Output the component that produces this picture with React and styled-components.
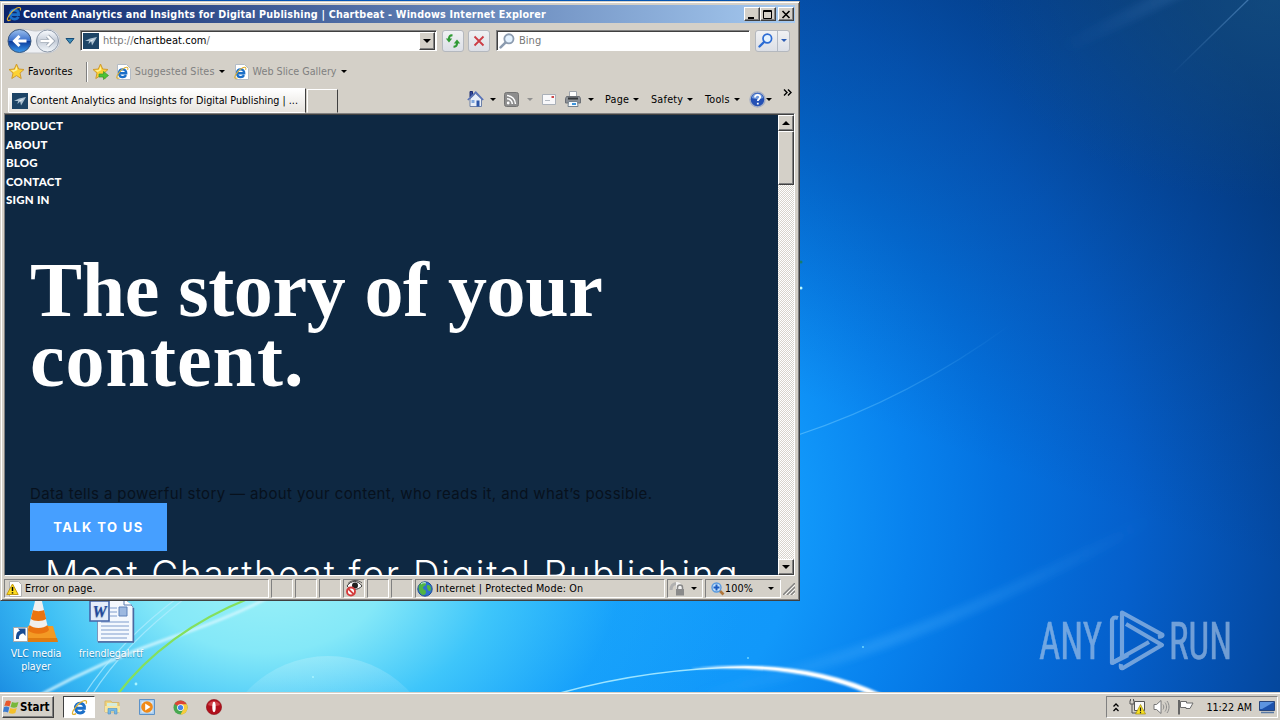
import React from 'react';
import styled, { createGlobalStyle, css } from 'styled-components';

const GlobalStyle = createGlobalStyle`
  * {
    box-sizing: border-box;
  }

  body {
    margin: 0;
    overflow: hidden;
    font-family: "DejaVu Sans Condensed", "DejaVu Sans", sans-serif;
    font-stretch: condensed;
    font-size: 10.7px;
    color: #000;
  }

  svg {
    display: block;
    flex: none;
  }
`;

const raised = css`
  background: #d4d0c8;
  border: 1px solid;
  border-color: #fff #404040 #404040 #fff;
  box-shadow: inset -1px -1px 0 #808080;
`;

const Text = styled.span`
  white-space: pre;
  margin-left: ${p => p.$ml || 0}px;
  margin-right: ${p => p.$mr || 0}px;
  letter-spacing: ${p => (p.$ls === undefined ? 'inherit' : p.$ls + 'px')};
  color: ${p => p.$color || 'inherit'};
  font-weight: ${p => (p.$bold ? 700 : 400)};
`;

const Desktop = styled.div`
  position: relative;
  width: 1280px;
  height: 720px;
  overflow: hidden;
  display: flex;
  flex-direction: column;
  justify-content: space-between;
  background:
    radial-gradient(ellipse 300px 200px at 1275px 0, rgba(30, 90, 130, .5), transparent),
    radial-gradient(ellipse 480px 330px at 265px 570px, #9cf2f8 0%, #84e8f8 25%, rgba(70, 205, 250, .85) 48%, rgba(30, 170, 250, .4) 74%, transparent 100%),
    linear-gradient(200deg, rgba(4, 50, 110, .55), transparent 48%),
    radial-gradient(circle at 560px 520px, #14a0fc 0, #1198fa 240px, #0882ee 350px, #0472e0 440px, #0560cc 570px, #044ba6 710px, #043c84 820px);
`;

const Wallpaper = styled.svg`
  position: absolute;
  inset: 0;
`;

const Watermark = styled.svg`
  position: absolute;
  left: 1036px;
  top: 606px;
`;

/* window frame */

const Window = styled.div`
  position: relative;
  width: 800px;
  height: 600px;
  margin-top: 1px;
  padding: 4px 5px 2px 4px;
  display: flex;
  flex-direction: column;
  background: #d4d0c8;
  border: 1px solid;
  border-color: #d4d0c8 #404040 #404040 #d4d0c8;
  box-shadow: inset 1px 1px 0 #fff, inset -1px -1px 0 #808080;
`;

const TitleBar = styled.div`
  flex: none;
  height: 18px;
  margin: -1px -1px 0 -1px;
  padding: 0 1px 0 2px;
  display: flex;
  align-items: center;
  background: linear-gradient(90deg, #0a246a, #a6caf0);
  color: #fff;

  > span {
    flex: 1;
  }
`;

const CaptionButton = styled.div`
  ${raised}
  width: 16px;
  height: 14px;
  margin-left: ${p => (p.$gap ? 2 : 0)}px;
  display: flex;
  justify-content: center;
  align-items: center;
`;

const NavRow = styled.div`
  flex: none;
  height: 35px;
  display: flex;
  align-items: center;
  padding-left: 1px;

  > svg + svg {
    margin-left: 3px;
  }
`;

const Caret = styled.i`
  flex: none;
  width: 0;
  height: 0;
  border: ${p => p.$size || 3}px solid transparent;
  border-top-color: ${p => p.$color || '#000'};
  border-bottom: 0;
`;

const Field = styled.div`
  height: 21px;
  width: ${p => p.$w}px;
  margin-left: ${p => p.$ml}px;
  display: flex;
  align-items: center;
  background: #fff;
  border: 1px solid;
  border-color: #808080 #fff #fff #808080;
  box-shadow: inset 1px 1px 0 #404040;
  padding: 1px 1px 1px 2px;
`;

const FieldText = styled.div`
  flex: 1;
  margin-left: 4px;
  font-size: 11px;
  line-height: 13px;
  letter-spacing: .04px;
  color: #777;
  white-space: pre;
`;

const FieldArrow = styled.div`
  ${raised}
  width: 16px;
  height: 18px;
  display: flex;
  justify-content: center;
  align-items: center;
`;

const SoftButton = styled.div`
  width: ${p => p.$w || 22}px;
  height: 22px;
  margin-left: ${p => p.$ml}px;
  display: flex;
  justify-content: center;
  align-items: center;
  border: 1px solid #b4b8be;
  border-radius: 3px;
  background: linear-gradient(#f0f1f3, #dcdfe6);
`;

const SplitLine = styled.div`
  width: 1px;
  height: 20px;
  background: #b4bac4;
  margin: 0 3px 0 4px;
`;

const FavRow = styled.div`
  flex: none;
  height: 27px;
  display: flex;
  align-items: center;
  padding-left: 3px;
  letter-spacing: .15px;
`;

const Separator = styled.div`
  width: 2px;
  height: 20px;
  margin: 0 4px 0 12px;
  border-left: 1px solid #808080;
  background: #fff;
`;

const TabRow = styled.div`
  flex: none;
  height: 28px;
  display: flex;
  align-items: flex-end;
  padding-left: 3px;
`;

const Tab = styled.div`
  width: 298px;
  height: 25px;
  display: flex;
  align-items: center;
  padding-left: 3px;
  background: linear-gradient(#fff, #e6e3de);
  border: 1px solid;
  border-color: #fff #404040 transparent #fff;
`;

const NewTab = styled.div`
  width: 31px;
  height: 24px;
  margin-left: 1px;
  border: 1px solid;
  border-color: #fff #404040 transparent #fff;
`;

const CommandBar = styled.div`
  margin-left: 129px;
  height: 28px;
  display: flex;
  align-items: center;
  letter-spacing: .25px;
`;

const Command = styled.div`
  width: ${p => p.$w}px;
  display: flex;
  align-items: center;
`;

const CommandFace = styled.div`
  flex: none;
  width: ${p => p.$w}px;
  display: flex;
`;

const Chevron = styled.div`
  align-self: flex-start;
  padding-top: 4px;
`;

/* page */

const Viewport = styled.div`
  flex: none;
  height: 463px;
  margin: 0 -1px;
  display: flex;
  border: 1px solid;
  border-color: #808080 #fff #fff #808080;
  box-shadow: inset 0 1px 0 #404040;
  padding-top: 1px;
`;

const Page = styled.div`
  flex: 1;
  overflow: hidden;
  background: #0e2842;
  color: #fff;
`;

const PageNav = styled.nav`
  display: flex;
  flex-direction: column;
  padding: 2px 0 0 1px;

  a {
    font: 900 11.5px/18.6px Lato, sans-serif;
    letter-spacing: .22px;
  }
`;

const Headline = styled.h1`
  margin: 45px 0 0 25px;
  display: flex;
  flex-direction: column;
  font: 700 78px/70px "Liberation Serif", serif;
  white-space: pre;
`;

const HeadlineRow = styled.span`
  letter-spacing: ${p => p.$ls}px;
`;

const Lead = styled.p`
  margin: 90px 0 0 25px;
  font: 400 15px/18px Inter, sans-serif;
  letter-spacing: .38px;
  color: #07111d;
  white-space: pre;
`;

const TalkButton = styled.div`
  width: 137px;
  height: 48px;
  margin-left: 25px;
  background: #469fff;
  display: flex;
  justify-content: center;
  align-items: center;
  font: 700 13px/48px Inter, sans-serif;
  letter-spacing: 1.4px;
  white-space: pre;
`;

const Subhead = styled.h2`
  margin: 0 0 0 40px;
  font: 300 37px/45px Inter, sans-serif;
  letter-spacing: 1.74px;
  white-space: pre;
`;

const ScrollBar = styled.div`
  width: 16px;
  display: flex;
  flex-direction: column;
  background: repeating-conic-gradient(#fff 0 25%, #d8d4cc 0 50%) 0 0 / 2px 2px;
`;

const ScrollButton = styled.div`
  ${raised}
  height: ${p => p.$h || 16}px;
  margin-top: ${p => (p.$end ? 'auto' : 0)};
  display: flex;
  justify-content: center;
  align-items: center;
`;

const StatusBar = styled.div`
  flex: none;
  height: 21px;
  margin: 2px -3px 0 -1px;
  display: flex;
  align-items: center;
  gap: 2px;
  letter-spacing: .16px;
`;

const Panel = styled.div`
  flex: none;
  width: ${p => p.$w}px;
  height: 19px;
  padding-left: 1px;
  display: flex;
  align-items: center;
  border: 1px solid;
  border-color: #808080 #fff #fff #808080;
  white-space: pre;
`;

/* desktop icons and taskbar */

const DesktopIcons = styled.div`
  position: absolute;
  left: 0;
  top: 599px;
  display: flex;
`;

const DesktopIcon = styled.div`
  width: ${p => p.$w}px;
  display: flex;
  flex-direction: column;
  align-items: center;
  color: #fff;
  font-size: 10.5px;
  line-height: 13px;
  text-align: center;
  text-shadow: 0 1px 1px rgba(0, 60, 110, .5);

  svg {
    margin-bottom: 4px;
  }
`;

const TaskBar = styled.div`
  position: relative;
  height: 28px;
  display: flex;
  align-items: center;
  padding: 1px 2px 0 2px;
  background: #d4d0c8;
  border-top: 1px solid #d4d0c8;
  box-shadow: inset 0 1px 0 #fff;
`;

const StartButton = styled.div`
  ${raised}
  width: 52px;
  height: 22px;
  display: flex;
  align-items: center;
  font-size: 11.5px;
`;

const ActiveTask = styled.div`
  width: 32px;
  height: 22px;
  margin: 0 1px 0 9px;
  display: flex;
  justify-content: center;
  align-items: center;
  background: #fff;
  border: 1px solid;
  border-color: #404040 #fff #fff #404040;
`;

const Task = styled.div`
  width: 33.7px;
  display: flex;
  justify-content: center;
`;

const Tray = styled.div`
  width: 172px;
  height: 22px;
  margin-left: auto;
  padding: 0 2px 0 6px;
  display: flex;
  align-items: center;
  border: 1px solid;
  border-color: #808080 #fff #fff #808080;
`;

const TrayCell = styled.div`
  width: ${p => p.$w}px;
`;

const IeIcon = ({ size = 16, boxed }) => (
  <svg width={size} height={size} viewBox="0 0 16 16">
    {boxed && <path d="M1.500 .5h9l4 4v11h-13z" fill="#fff" stroke="#b4bcc6" />}
    <g fill="none" transform={boxed ? 'translate(-.5 2) scale(.85)' : undefined}>
      <path d="M4.400 8.600h8.200C12.800 5.800 11 4 8.500 4S4.200 5.900 4.200 8.500s1.700 4.600 4.300 4.600c1.800 0 3.100-.8 3.900-2.300" stroke="#1b6fc8" strokeWidth="2.800" />
      <path d="M5 6.500C5.700 5 7 4.100 8.500 4.100" stroke="#6db9f4" strokeWidth="1" />
      <path d="M14.200 4.500c.8-2 .3-3.200-1.300-3-2.200.3-6 3.100-8.600 6.300-2.300 2.900-3.500 5.700-2.500 6.500.6.500 1.700.2 3-.5" stroke="#e0b030" strokeWidth="1.200" />
    </g>
  </svg>
);

const SiteIcon = () => (
  <svg width="16" height="16" viewBox="0 0 16 16">
    <path d="M0 0h16v16H0z" fill="#1d4466" />
    <path d="m2 8 5-2.500 7-1.500-2 3.500-3 5-.8-4L5.500 11 6 8z" fill="#a9bfd0" />
    <path d="m7 7.500 5-2-3.500 3z" fill="#e4ecf2" />
  </svg>
);

const NavArrows = () => (
  <svg width="56" height="26" viewBox="0 0 56 26">
    <defs>
      <linearGradient id="back" x2="0" y2="1">
        <stop offset="0" stopColor="#9cc0ee" />
        <stop offset=".48" stopColor="#3a70cc" />
        <stop offset=".52" stopColor="#0c3c9c" />
        <stop offset="1" stopColor="#3c9cf0" />
      </linearGradient>
      <linearGradient id="fwd" x2="0" y2="1">
        <stop offset="0" stopColor="#fafcff" />
        <stop offset=".5" stopColor="#c4ccd8" />
        <stop offset="1" stopColor="#f4f8fc" />
      </linearGradient>
    </defs>
    <path d="M13 1c9 0 12 2 17 2s8-2 12-2a12 12 0 0 1 0 24H13z" fill="#eef0f4" stroke="#c4c6ca" />
    <circle cx="13.500" cy="13" r="11.500" fill="url(#back)" stroke="#3c587c" />
    <circle cx="41.500" cy="13" r="11" fill="url(#fwd)" stroke="#8c98a8" />
    <path d="M20.500 13h-12m5-5-5 5 5 5" fill="none" stroke="#fff" strokeWidth="3" />
    <path d="M34.500 13h12m-5-5 5 5-5 5" fill="none" stroke="#99a3b0" strokeWidth="4" />
    <path d="M34.500 13h12m-5-5 5 5-5 5" fill="none" stroke="#fff" strokeWidth="2.400" />
  </svg>
);

const Star = ({ add }) => (
  <svg width="17" height="17" viewBox="0 0 17 17">
    <path d="m8.500 1 2.200 5 5.300.5-4 3.600 1.200 5.400-4.700-2.900-4.700 2.900L5 10.100 1 6.500 6.300 6z" fill="#fcd232" stroke="#d09a30" strokeLinejoin="round" />
    <path d="m8.500 3 1 4-4 2L3 7.300l4-.4z" fill="#fff09a" />
    {add && <path d="M7 11h4.500V8.500l5 4-5 4V14H7z" fill="#4cc434" stroke="#3a962c" strokeWidth=".7" />}
  </svg>
);

const Lens = ({ size = 15, color = '#2c6cd4', glass = '#e4f2ff', handle }) => (
  <svg width={size} height={size} viewBox="0 0 15 15">
    <path d="m6.500 8.500-5 5" stroke={handle || color} strokeWidth="2.400" strokeLinecap="round" />
    <circle cx="9.300" cy="5.500" r="4.300" fill={glass} stroke={color} strokeWidth="1.700" />
  </svg>
);

const Home = () => (
  <svg width="17" height="18" viewBox="0 0 17 18">
    <path d="M3 1.500h2.500V5L3 7z" fill="#30499c" stroke="#1d2c70" />
    <path d="M3 9v7.500h11.500V9L8.700 3.500z" fill="#e8eef8" stroke="#6c80a8" />
    <path d="m.8 10 8-7.800 7.400 7.800" fill="none" stroke="#5872b8" strokeWidth="1.600" />
    <path d="M9.500 10.500h3v6h-3z" fill="#2c56a8" />
    <path d="M4.500 10h3v3h-3z" fill="#7fa6dc" />
  </svg>
);

const Rss = () => (
  <svg width="15" height="15" viewBox="0 0 15 15">
    <rect x=".5" y=".5" width="14" height="14" rx="2" fill="#8d8d8d" stroke="#747474" />
    <circle cx="4.200" cy="11" r="1.400" fill="#fff" />
    <path d="M3 6.800A5.200 5.200 0 0 1 8.300 12M3 3.600A8.500 8.500 0 0 1 11.500 12" fill="none" stroke="#fff" strokeWidth="1.500" />
  </svg>
);

const Mail = () => (
  <svg width="14" height="11" viewBox="0 0 14 11">
    <path d="M.5.5h13v10H.5z" fill="#f8f8fa" stroke="#aab0b8" />
    <path d="M9.500 2H12v2H9.500z" fill="#cc4848" />
    <path d="M3 6.500h5" stroke="#b4bac2" />
  </svg>
);

const Printer = () => (
  <svg width="16" height="16" viewBox="0 0 16 16">
    <path d="M4.500.5h7V6h-7z" fill="#fff" stroke="#a0a6ae" />
    <path d="M1.500 5.500h13l1 2v4.500H.5V7.500z" fill="#8c9096" stroke="#6c7076" />
    <path d="M3 7.500h10" stroke="#34383c" strokeWidth="2" />
    <path d="M3.500 10.500h9l.5 5H3z" fill="#f4faff" stroke="#76828e" />
    <path d="M7 12h4v2H7z" fill="#3c94dc" />
  </svg>
);

const Help = () => (
  <svg width="17" height="17" viewBox="0 0 17 17">
    <circle cx="8.500" cy="8.500" r="7.500" fill="#2450b4" stroke="#a4aec4" strokeWidth="1.500" />
    <path d="M2.700 7a6 6 0 0 1 11.600 0c-4 1.500-7 1.500-11.600 0z" fill="#6f98dc" />
    <path d="M6 6.500c0-3.400 5.200-3.200 5.200-.4 0 1.900-2.400 1.900-2.400 4M8.800 11.800v1.800" fill="none" stroke="#fff" strokeWidth="1.800" />
  </svg>
);

const Refresh = () => (
  <svg width="16" height="16" viewBox="0 0 16 16">
    <g fill="none" stroke="#2f9a34" strokeWidth="2.200">
      <path d="M7.500 2.500C5 2 4 3.500 4 6M8.500 13.500c2.500.5 3.500-1 3.500-3.500" />
    </g>
    <path d="M.8 5.500h6.400L4 9.500zM8.800 10.500h6.400L12 6.500z" fill="#2f9a34" />
  </svg>
);

const Warning = () => (
  <svg width="17" height="16" viewBox="0 0 17 16">
    <path d="M3.500.5h9l3 3v12h-12z" fill="#fff" stroke="#b0b0b0" />
    <path d="m6.500 3 5.700 10.500H.8z" fill="#fcdc20" stroke="#c49a10" strokeLinejoin="round" />
    <path d="M6.500 6v4M6.500 11.200v1.400" stroke="#000" strokeWidth="1.500" />
  </svg>
);

const EyeBlocked = () => (
  <svg width="19" height="17" viewBox="0 0 19 17">
    <path d="M2 6c4-6 11-6 15 0-4 4.500-11 4.500-15 0z" fill="#fff" stroke="#3c3c3c" />
    <circle cx="10" cy="5.500" r="3" fill="#222" />
    <path d="M3 3.500C7-.5 13-.5 17 3" fill="none" stroke="#555" />
    <circle cx="6" cy="11.500" r="4" fill="#fff" stroke="#d43c3c" strokeWidth="1.900" />
    <path d="m3.300 8.800 5.400 5.400" stroke="#d43c3c" strokeWidth="1.900" />
  </svg>
);

const Globe = () => (
  <svg width="16" height="16" viewBox="0 0 16 16">
    <circle cx="8" cy="8" r="7.200" fill="#2d6fd0" stroke="#1d4c94" />
    <path d="M3 3c3-3 6-2 6 0S6 5 6 7s3 1 3 4-3 4-5 2-3.500-8-1-10z" fill="#50b444" />
    <path d="M11 4c2 0 3 2 3 4s-2 3-3 1-2-5 0-5z" fill="#50b444" />
    <path d="M4 3c2-1.500 4-1.500 5-1" stroke="#cce8ff" fill="none" />
  </svg>
);

const ZoneLock = () => (
  <svg width="16" height="15" viewBox="0 0 16 15">
    <path d="M2 9c0-4 2-6 5-6.500" stroke="#b0b0b0" strokeWidth="3" fill="none" />
    <path d="M7 1c4 0 6 2 6 6v5H7z" fill="#f2f2f2" />
    <path d="M8.500 8V6.500a2.500 2.500 0 0 1 5 0V8" fill="none" stroke="#888" strokeWidth="1.500" />
    <path d="M7 8h8v6.500H7z" fill="#8a8a8a" />
  </svg>
);

const ZoomIcon = () => (
  <svg width="14" height="14" viewBox="0 0 14 14">
    <path d="m8 8 4.500 4.500" stroke="#b0763a" strokeWidth="2.600" />
    <circle cx="5.500" cy="5.500" r="4.500" fill="#c4e2fc" stroke="#5a9ade" strokeWidth="1.400" />
    <path d="M5.500 2.500v6M2.500 5.500h6" stroke="#1c5cc0" strokeWidth="2" />
  </svg>
);

const Grip = () => (
  <svg width="12" height="12" viewBox="0 0 12 12">
    <path d="M0 12 12 0M4 12l8-8M8 12l4-4" stroke="#808080" strokeWidth="1.400" />
    <path d="M2 12 12 2M6 12l6-6M10 12l2-2" stroke="#fff" strokeWidth=".8" />
  </svg>
);

const VlcIcon = () => (
  <svg width="46" height="44" viewBox="0 0 46 44">
    <path d="m15 27-5 14h34l-4-14z" fill="#f39a24" />
    <path d="m11 39-1 4h35l-1-4z" fill="#e07c10" />
    <path d="M22.500 0h6L35 29c-3 4.500-16 4.500-19.500 0z" fill="#f0f0ee" />
    <path d="m20 11-2.200 9c3 2.500 12 2.500 15.400 0L31 11c-3 1.500-8 1.500-11 0z" fill="#ea7410" />
    <path d="m16.500 26-1.500 5c4 5 17 5 21 0l-1.500-5c-4 4-14 4-18 0z" fill="#ea7410" />
    <path d="M.5 28.500h14v14H.5z" fill="#fff" stroke="#aaa" />
    <path d="M3 40c0-6 1.500-8 4-8l-2-2.500h7.500V37L10.500 34.500c-3.500 0-5 2.500-4.500 5.500z" fill="#184c94" />
  </svg>
);

const DocIcon = () => (
  <svg width="48" height="44" viewBox="0 0 48 44">
    <path d="M10.500 0H38l8 8v34.500H10.500z" fill="#f4f8fe" stroke="#7c96bc" />
    <path d="M46.500 9v34M11 43h36" stroke="#4c68a0" strokeWidth="1.400" />
    <path d="M37 0v6h8" fill="#fff" stroke="#5b7cb0" />
    <path d="M23 9h7M23 13h7M23 17h7M14 23h28M14 27h28M14 31h28M14 35h28M14 39h26" stroke="#7e9ccc" />
    <path d="M32 8h8v9h-8z" fill="#9cb8e0" stroke="#5c80b8" />
    <path d="M3 2h19v20H3z" fill="#e4ecfa" stroke="#4464a8" strokeWidth="1.600" />
    <text x="12.500" y="17.500" textAnchor="middle" fontFamily="Liberation Serif" fontSize="16" fontWeight="700" fontStyle="italic" fill="#24489c">W</text>
  </svg>
);

const StartFlag = () => (
  <svg width="17" height="16" viewBox="0 0 17 16">
    <path d="M3 2c2-1 3.500-.5 5 .5L6.500 7.500C5 6.500 3 6.500 1.300 7z" fill="#e8582c" />
    <path d="M9 3c2 1 4 1 6.500 0L14 8c-2 1-4.500.7-6.500 0z" fill="#78b83c" />
    <path d="M1 8c2-1 3.700-.5 5.300.5L5 13.500C3.500 12.500 1.500 12.500 0 13z" fill="#3c7cd0" />
    <path d="M7.300 9c2 1 4 1 6.500 0l-1.500 5c-2 1-4.500.7-6.500 0z" fill="#f4c02c" />
  </svg>
);

const FolderIcon = () => (
  <svg width="17" height="16" viewBox="0 0 17 16">
    <path d="M1 2h6l1 1.500h7V13H1z" fill="#f2d478" stroke="#d4b870" />
    <path d="M3 4h10v4H3z" fill="#d4ecdc" />
    <path d="M1 7h15v6H1z" fill="#f8e6a0" />
    <path d="M4 15V9.500h9V15h-2.500v-3h-4v3z" fill="#76b8e4" stroke="#4a92c8" strokeWidth=".6" />
  </svg>
);

const MediaIcon = () => (
  <svg width="16" height="16" viewBox="0 0 16 16">
    <path d="M.5.500h15v15H.5z" fill="#a8ccee" stroke="#5c92c8" />
    <path d="M2.500 2.500h11v11h-11z" fill="#dcecfa" />
    <circle cx="8" cy="8" r="5.800" fill="#f08a18" />
    <path d="m6.200 4.600 5.300 3.400-5.300 3.400z" fill="#fff" />
  </svg>
);

const ChromeIcon = () => (
  <svg width="15" height="15" viewBox="0 0 16 16">
    <circle cx="8" cy="8" r="7.500" fill="#48a850" />
    <path d="M8 8 1.500 4.250A7.500 7.500 0 0 1 14.500 4.250z" fill="#dc4436" />
    <path d="M8 4.500h6.650A7.500 7.500 0 0 1 8 15.500L11.200 9.500z" fill="#f8cc3c" />
    <circle cx="8" cy="8" r="3.600" fill="#fff" />
    <circle cx="8" cy="8" r="2.800" fill="#4484e8" />
  </svg>
);

const OperaIcon = () => (
  <svg width="16" height="16" viewBox="0 0 16 16">
    <circle cx="8" cy="8" r="7.600" fill="#b0101c" stroke="#8c0c14" strokeWidth=".6" />
    <path d="M2 6a6.500 6 0 0 1 12 0c-3 1.500-9 1.500-12 0z" fill="#d0444a" />
    <ellipse cx="8" cy="8" rx="1.700" ry="5.200" fill="#fff" />
  </svg>
);

const NetIcon = () => (
  <svg width="17" height="16" viewBox="0 0 17 16">
    <path d="M5.500 2.500h10v9h-10z" fill="#f8f8f8" stroke="#555" />
    <path d="M1 1.500v3.500h4V1.500M3 5v9h5M1.500 0v2M4.500 0v2" fill="none" stroke="#555" />
    <path d="m11.500 5.500 5 9.500h-10z" fill="#f8e020" stroke="#a08c10" strokeWidth=".7" />
    <path d="M11.500 8.500v3.500M11.500 12.800v1.400" stroke="#222" strokeWidth="1.200" />
  </svg>
);

const SpeakerIcon = () => (
  <svg width="17" height="16" viewBox="0 0 17 16">
    <path d="M1 5.500h2.500L8 1.500v13l-4.500-4H1z" fill="#fff" stroke="#777" />
    <path d="M10 5.500c1 1.500 1 3.500 0 5M12 3.500c2 2.500 2 6.500 0 9M14 2c2.700 3.500 2.700 8.500 0 12" fill="none" stroke="#8c8c8c" />
  </svg>
);

const FlagIcon = () => (
  <svg width="17" height="16" viewBox="0 0 17 16">
    <path d="M2 1v14.500" stroke="#666" strokeWidth="2" />
    <path d="M3.500 2.500h6v1.500H16l-3 5.500H9V8.500H3.500z" fill="#fff" stroke="#6c6c6c" />
  </svg>
);

const MonitorIcon = () => (
  <svg width="16" height="13" viewBox="0 0 16 13">
    <path d="M.5.5h15v9H.5z" fill="#1c52ac" stroke="#28467c" />
    <path d="M1 1h14L3 8H1z" fill="#5c94e0" />
    <path d="M2 11.500h13" stroke="#5878a4" strokeWidth="1.500" />
  </svg>
);

const Streaks = () => (
  <Wallpaper width="1280" height="720" viewBox="0 0 1280 720">
    <defs>
      <linearGradient id="fade">
        <stop offset="0" stopColor="#6cc8ff" stopOpacity=".6" />
        <stop offset="1" stopColor="#6cc8ff" stopOpacity="0" />
      </linearGradient>
      <linearGradient id="beam" gradientUnits="userSpaceOnUse" x1="690" y1="690" x2="1150" y2="520">
        <stop offset="0" stopColor="#50b4ff" stopOpacity="0" />
        <stop offset=".4" stopColor="#50b4ff" stopOpacity=".3" />
        <stop offset="1" stopColor="#50b4ff" stopOpacity="0" />
      </linearGradient>
      <linearGradient id="beamTop" gradientUnits="userSpaceOnUse" x1="1180" y1="0" x2="1060" y2="50">
        <stop offset="0" stopColor="#5c9cdc" stopOpacity=".16" />
        <stop offset="1" stopColor="#5c9cdc" stopOpacity="0" />
      </linearGradient>
      <linearGradient id="ray" gradientUnits="userSpaceOnUse" x1="1250" y1="0" x2="1172" y2="74">
        <stop offset="0" stopColor="#6ca4dc" stopOpacity=".5" />
        <stop offset="1" stopColor="#6ca4dc" stopOpacity="0" />
      </linearGradient>
      <linearGradient id="ball" x2="0" y2="1">
        <stop offset="0" stopColor="#fff" stopOpacity=".2" />
        <stop offset=".3" stopColor="#fff" stopOpacity="0" />
      </linearGradient>
      <filter id="soft" x="-20%" y="-50%" width="140%" height="200%"><feGaussianBlur stdDeviation="1" /></filter>
      <filter id="softer" x="-20%" y="-50%" width="140%" height="200%"><feGaussianBlur stdDeviation="3" /></filter>
    </defs>
    <g fill="none">
      <path d="M40 695Q105 660 170 638T275 594" stroke="#d8f8ff" strokeWidth="3" opacity=".8" filter="url(#soft)" />
      <path d="M84 695Q120 640 180 596M92 695Q124 644 188 596" stroke="#b4ecff" strokeWidth="1.200" opacity=".7" />
      <path d="M117 695Q165 632 250 598" stroke="#84e05c" strokeWidth="2.200" />
      <circle cx="328" cy="767" r="111" fill="url(#ball)" />
      <path d="M690 698Q860 660 1000 595T1180 500" stroke="url(#beam)" strokeWidth="12" filter="url(#softer)" />
      <path d="M560 693Q650 668 748 667Q815 669 876 694" stroke="#9ce4ff" strokeWidth="1.600" />
      <path d="M690 669Q800 656 882 694L868 694Q800 664 690 669z" fill="#fff" filter="url(#soft)" />
      <path d="M798 435Q910 398 1010 325" stroke="url(#fade)" strokeWidth="1.300" />
      <path d="M1250-2 1172 74" stroke="url(#ray)" strokeWidth="1.300" />
      <path d="M1190-15 1050 55" stroke="url(#beamTop)" strokeWidth="14" filter="url(#softer)" />
    </g>
    <circle cx="801" cy="288" r="1.500" fill="#b8f8ff" />
    <circle cx="801" cy="262" r="1.500" fill="#187c6c" />
    <circle cx="863" cy="647" r="1" fill="#6cd4ff" />
    <circle cx="748" cy="658" r="1" fill="#6cd4ff" />
    <circle cx="136" cy="684" r="1.400" fill="#a8f4ff" />
    <circle cx="313" cy="677" r="1" fill="#a8f4ff" />
  </Wallpaper>
);

const AnyRun = () => (
  <Watermark width="206" height="76" viewBox="0 0 206 76">
    <g opacity=".62" fill="#b4cdea" stroke="#b4cdea" fontFamily="Roboto, sans-serif" fontSize="52">
      <text x="3" y="53" strokeWidth=".5" textLength="63" lengthAdjust="spacingAndGlyphs">ANY</text>
      <text x="133" y="53" strokeWidth=".5" textLength="63" lengthAdjust="spacingAndGlyphs">RUN</text>
      <g fill="none" strokeWidth="4.200" strokeLinejoin="round">
        <path d="M82 12Q76 10 76 16V57L113 36" />
        <path d="M86 50V6.500L126 28.500Q128 30 122 31" />
        <path d="M76 57 92 49M90 18 126 39 87 62Q84 63 85 58" />
      </g>
    </g>
  </Watermark>
);

const App = () => (
  <>
    <GlobalStyle />
    <Desktop>
      <Streaks />
      <DesktopIcons>
        <DesktopIcon $w={72}>
          <VlcIcon />
          <Text>{'VLC media\nplayer'}</Text>
        </DesktopIcon>
        <DesktopIcon $w={78}>
          <DocIcon />
          <Text>friendlegal.rtf</Text>
        </DesktopIcon>
      </DesktopIcons>
      <AnyRun />

      <Window>
        <TitleBar>
          <IeIcon />
          <Text $bold $ml={1} $ls={.19}>Content Analytics and Insights for Digital Publishing | Chartbeat - Windows Internet Explorer</Text>
          <CaptionButton>
            <svg width="10" height="9"><path d="M1 7h6v2H1z" /></svg>
          </CaptionButton>
          <CaptionButton>
            <svg width="10" height="9"><path d="M.5.5h8v8h-8zM0 1.500h9" fill="none" stroke="#000" /></svg>
          </CaptionButton>
          <CaptionButton $gap>
            <svg width="10" height="9"><path d="m1.500 1 7 7M8.500 1l-7 7" stroke="#000" strokeWidth="1.600" /></svg>
          </CaptionButton>
        </TitleBar>

        <NavRow>
          <NavArrows />
          <svg width="11" height="8" viewBox="0 0 11 8">
            <path d="M1 1.500h8L5 6.500z" fill="#3c8cb8" stroke="#164c78" />
          </svg>
          <Field $w={357} $ml={4}>
            <SiteIcon />
            <FieldText>http://<Text $color="#000">chartbeat.com</Text>/</FieldText>
            <FieldArrow><Caret $size={4} /></FieldArrow>
          </Field>
          <SoftButton $ml={5}><Refresh /></SoftButton>
          <SoftButton $ml={4}>
            <svg width="12" height="12"><path d="m1.500 1.500 9 9M10.500 1.500l-9 9" stroke="#cc3c44" strokeWidth="1.800" /></svg>
          </SoftButton>
          <Field $w={254} $ml={6}>
            <Lens size={16} color="#8c9cb0" />
            <FieldText>Bing</FieldText>
          </Field>
          <SoftButton $w={35} $ml={5}>
            <Lens />
            <SplitLine />
            <Caret $color="#2c5cb4" />
          </SoftButton>
        </NavRow>

        <FavRow>
          <Star />
          <Text $ml={3} $mr={1}>Favorites</Text>
          <Separator />
          <Star add />
          <CommandFace $w={7} />
          <IeIcon boxed />
          <Text $color="#808080" $ml={3} $mr={4}>Suggested Sites</Text>
          <Caret />
          <CommandFace $w={9} />
          <IeIcon boxed />
          <Text $color="#808080" $ml={3} $mr={4} $ls={0}>Web Slice Gallery</Text>
          <Caret />
        </FavRow>

        <TabRow>
          <Tab>
            <SiteIcon />
            <Text $ml={2}>Content Analytics and Insights for Digital Publishing | ...</Text>
          </Tab>
          <NewTab />
          <CommandBar>
            <Command $w={37}><CommandFace $w={23}><Home /></CommandFace><Caret /></Command>
            <Command $w={38}><CommandFace $w={23}><Rss /></CommandFace><Caret $color="#909090" /></Command>
            <Command $w={23}><Mail /></Command>
            <Command $w={40}><CommandFace $w={23}><Printer /></CommandFace><Caret /></Command>
            <Command $w={46}><CommandFace $w={28}>Page</CommandFace><Caret /></Command>
            <Command $w={54}><CommandFace $w={36}>Safety</CommandFace><Caret /></Command>
            <Command $w={44}><CommandFace $w={29}>Tools</CommandFace><Caret /></Command>
            <Command $w={34}><CommandFace $w={17}><Help /></CommandFace><Caret /></Command>
            <Chevron>
              <svg width="9" height="7"><path d="m1 .5 3 3-3 3m4-6 3 3-3 3" fill="none" stroke="#000" strokeWidth="1.400" /></svg>
            </Chevron>
          </CommandBar>
        </TabRow>

        <Viewport>
          <Page>
            <PageNav>
              <a>PRODUCT</a>
              <a>ABOUT</a>
              <a>BLOG</a>
              <a>CONTACT</a>
              <a>SIGN IN</a>
            </PageNav>
            <Headline>
              <HeadlineRow $ls={-.35}>The story of your</HeadlineRow>
              <HeadlineRow $ls={1}>content.</HeadlineRow>
            </Headline>
            <Lead>Data tells a powerful story — about your content, who reads it, and what’s possible.</Lead>
            <TalkButton>TALK TO US</TalkButton>
            <Subhead>Meet Chartbeat for Digital Publishing</Subhead>
          </Page>
          <ScrollBar>
            <ScrollButton>
              <svg width="8" height="4"><path d="M0 4h8L4 0z" /></svg>
            </ScrollButton>
            <ScrollButton $h={54} />
            <ScrollButton $end><Caret $size={4} /></ScrollButton>
          </ScrollBar>
        </Viewport>

        <StatusBar>
          <Panel $w={265}><Warning /><Text $ml={2}>Error on page.</Text></Panel>
          <Panel $w={22} />
          <Panel $w={22} />
          <Panel $w={22} />
          <Panel $w={22}><EyeBlocked /></Panel>
          <Panel $w={22} />
          <Panel $w={22} />
          <Panel $w={250}><Globe /><Text $ml={3}>Internet | Protected Mode: On</Text></Panel>
          <Panel $w={36}>
            <CommandFace $w={22}><ZoneLock /></CommandFace>
            <Caret />
          </Panel>
          <Panel $w={76}>
            <CommandFace $w={18}><CommandFace $w={4} /><ZoomIcon /></CommandFace>
            <CommandFace $w={43}>100%</CommandFace>
            <Caret />
          </Panel>
          <Grip />
        </StatusBar>
      </Window>

      <TaskBar>
        <StartButton><StartFlag /><Text $bold>Start</Text></StartButton>
        <ActiveTask><IeIcon size={17} /></ActiveTask>
        <Task><FolderIcon /></Task>
        <Task><MediaIcon /></Task>
        <Task><ChromeIcon /></Task>
        <Task><OperaIcon /></Task>
        <Tray>
          <TrayCell $w={16}>
            <svg width="6" height="9"><path d="M.5 3.500 3 1l2.500 2.500M.5 8 3 5.500 5.500 8" fill="none" stroke="#000" strokeWidth="1.300" /></svg>
          </TrayCell>
          <TrayCell $w={24}><NetIcon /></TrayCell>
          <TrayCell $w={24}><SpeakerIcon /></TrayCell>
          <TrayCell $w={29}><FlagIcon /></TrayCell>
          <TrayCell $w={54}><Text $ml={1}>11:22 AM</Text></TrayCell>
          <MonitorIcon />
        </Tray>
      </TaskBar>
    </Desktop>
  </>
);

export default App;
